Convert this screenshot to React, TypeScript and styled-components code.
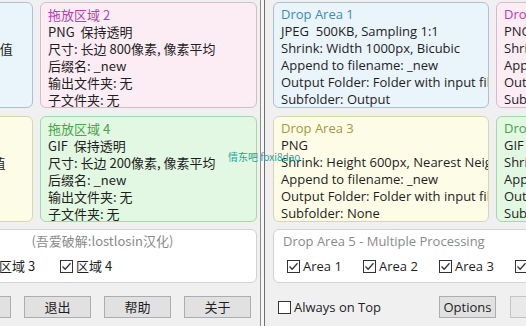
import React from "react";
import styled, { createGlobalStyle } from "styled-components";

const GlobalStyle = createGlobalStyle`
  html, body {
    margin: 0;
    padding: 0;
    background: #f4f4f4;
  }
  * {
    box-sizing: border-box;
  }
`;

type Tone = "blue" | "pink" | "yellow" | "green";
type Side = "left" | "right";

const tones: Record<Tone, { bg: string; border: string; title: string }> = {
  blue: { bg: "#eaf4fb", border: "#a9c3d2", title: "#3b8db3" },
  pink: { bg: "#fcecf4", border: "#d6bccb", title: "#b43fae" },
  yellow: { bg: "#fdfde7", border: "#d8d6ae", title: "#a6973a" },
  green: { bg: "#e2f8e2", border: "#a8d6a8", title: "#47a447" },
};

const Screen = styled.div`
  position: relative;
  width: 526px;
  height: 326px;
  display: flex;
  overflow: hidden;
  font-size: 13px;
  color: #1e1e1e;
`;

// left window is the Chinese build, right one the English build
const Window = styled.div<{ $side: Side }>`
  flex: none;
  width: ${(p) => (p.$side === "left" ? "261px" : "262px")};
  height: 326px;
  background: #f0f0f0;
  display: flex;
  flex-direction: column;
  align-items: ${(p) => (p.$side === "left" ? "flex-end" : "flex-start")};
  overflow: hidden;
  font-family: ${(p) =>
    p.$side === "left"
      ? `"Noto Sans CJK SC", sans-serif`
      : `"Open Sans", "Noto Sans CJK SC", sans-serif`};
  padding: ${(p) => (p.$side === "left" ? "2px 3px 0 0" : "2px 0 0 8px")};
  border-${(p) => (p.$side === "left" ? "right" : "left")}: 1px solid
    ${(p) => (p.$side === "left" ? "#8c8c8c" : "#6e6e6e")};
`;

const Gap = styled.div`
  flex: none;
  width: 3px;
  background: #f7f7f7;
`;

const CardGrid = styled.div`
  flex: none;
  display: grid;
  grid-template-columns: 216px 217px;
  grid-auto-rows: 106px;
  column-gap: 7px;
  row-gap: 8px;
`;

const Card = styled.div<{ $tone: Tone }>`
  background: ${(p) => tones[p.$tone].bg};
  border: 1px solid ${(p) => tones[p.$tone].border};
  border-radius: 6px;
  padding: 3px 0 0 7px;
  overflow: hidden;
  white-space: pre;
`;

const CardTitle = styled.div<{ $tone: Tone }>`
  color: ${(p) => tones[p.$tone].title};
  line-height: 17px;
`;

const CardLine = styled.div`
  line-height: 17px;
`;

const Group = styled.div`
  flex: none;
  width: 440px;
  margin-top: 7px;
  height: 54px;
  background: #ffffff;
  border: 1px solid #d2d2d2;
  border-radius: 6px;
  padding: 2px 9px 0 9px;
  white-space: nowrap;
`;

const GroupTitle = styled.div`
  display: flex;
  color: #8a8a8a;
  line-height: 18px;
`;

const TitleNote = styled.span<{ $offset: number }>`
  margin-left: ${(p) => p.$offset}px;
`;

const CheckRow = styled.div<{ $pitch: number; $indent: number }>`
  display: flex;
  margin-top: 7px;
  padding-left: ${(p) => p.$indent}px;
  height: 18px;
  align-items: center;
  & > * {
    flex: none;
    width: ${(p) => p.$pitch}px;
  }
`;

const CheckItem = styled.label`
  display: flex;
  align-items: center;
  gap: 3px;
  line-height: 18px;
`;

const Box = styled.span`
  flex: none;
  width: 13px;
  height: 13px;
  border: 1px solid #333333;
  background: #ffffff;
  display: inline-flex;
  align-items: center;
  justify-content: center;
`;

const BottomRow = styled.div<{ $side: Side }>`
  flex: none;
  width: 440px;
  margin-top: 13px;
  height: 22px;
  display: flex;
  align-items: center;
  gap: ${(p) => (p.$side === "left" ? "13px" : "14px")};
  padding: ${(p) => (p.$side === "left" ? "0 6px 0 0" : "0 0 0 5px")};
`;

const CheckCell = styled.div<{ $w?: number }>`
  flex: ${(p) => (p.$w ? "none" : "1")};
  width: ${(p) => (p.$w ? `${p.$w}px` : "auto")};
`;

const Button = styled.button<{ $w: number; $muted?: boolean }>`
  flex: none;
  width: ${(p) => p.$w}px;
  height: 22px;
  font: inherit;
  color: #1e1e1e;
  background: ${(p) => (p.$muted ? "#e9e9e9" : "#e1e1e1")};
  border: 1px solid ${(p) => (p.$muted ? "#c4c4c4" : "#adadad")};
  border-radius: 0;
  padding: 0;
  line-height: 20px;
`;

const Watermark = styled.div`
  position: absolute;
  left: 228px;
  top: 151px;
  font-size: 10px;
  line-height: 12px;
  color: #1ea59b;
  white-space: nowrap;
  font-family: "Noto Sans CJK SC", "Open Sans", sans-serif;
`;

const Check = ({ checked, label }: { checked: boolean; label: string }) => (
  <CheckItem>
    <Box>
      {checked && (
        <svg width="11" height="11" viewBox="0 0 11 11">
          <path d="M1.5 5.5 L4.2 8.2 L9.5 2.3" fill="none" stroke="#333" strokeWidth="1.3" />
        </svg>
      )}
    </Box>
    {label}
  </CheckItem>
);

type AreaData = { tone: Tone; title: string; lines: string[] };

const Area = ({ tone, title, lines }: AreaData) => (
  <Card $tone={tone}>
    <CardTitle $tone={tone}>{title}</CardTitle>
    {lines.map((l, i) => (
      <CardLine key={i}>{l}</CardLine>
    ))}
  </Card>
);

const zhAreas: AreaData[] = [
  {
    tone: "blue",
    title: "拖放区域 1",
    lines: ["JPEG  500KB, 采样 1:1", "尺寸: 宽度 1000像素, 双三次插值", "后缀名: _new", "输出文件夹: 源文件夹", "子文件夹: Output"],
  },
  {
    tone: "pink",
    title: "拖放区域 2",
    lines: ["PNG  保持透明", "尺寸: 长边 800像素, 像素平均", "后缀名: _new", "输出文件夹: 无", "子文件夹: 无"],
  },
  {
    tone: "yellow",
    title: "拖放区域 3",
    lines: ["PNG", "尺寸: 高度 600像素, 最邻近插值", "后缀名: _new", "输出文件夹: 源文件夹", "子文件夹: 无"],
  },
  {
    tone: "green",
    title: "拖放区域 4",
    lines: ["GIF  保持透明", "尺寸: 长边 200像素, 像素平均", "后缀名: _new", "输出文件夹: 无", "子文件夹: 无"],
  },
];

const enAreas: AreaData[] = [
  {
    tone: "blue",
    title: "Drop Area 1",
    lines: [
      "JPEG  500KB, Sampling 1:1",
      "Shrink: Width 1000px, Bicubic",
      "Append to filename: _new",
      "Output Folder: Folder with input file",
      "Subfolder: Output",
    ],
  },
  {
    tone: "pink",
    title: "Drop Area 2",
    lines: ["PNG  Keep transparency", "Shrink: Long side 800px, Average", "Append to filename: _new", "Output Folder: None", "Subfolder: None"],
  },
  {
    tone: "yellow",
    title: "Drop Area 3",
    lines: [
      "PNG",
      "Shrink: Height 600px, Nearest Neighbor",
      "Append to filename: _new",
      "Output Folder: Folder with input file",
      "Subfolder: None",
    ],
  },
  {
    tone: "green",
    title: "Drop Area 4",
    lines: ["GIF  Keep transparency", "Shrink: Long side 200px, Average", "Append to filename: _new", "Output Folder: None", "Subfolder: None"],
  },
];

const App = () => {
  return (
    <>
      <GlobalStyle />
      <Screen>
        <Window $side="left">
          <CardGrid>
            {zhAreas.map((a) => (
              <Area key={a.title} {...a} />
            ))}
          </CardGrid>
          <Group>
            <GroupTitle>
              <span>拖放区域 5 - 多重处理</span>
              <TitleNote $offset={80}>(吾爱破解:lostlosin汉化)</TitleNote>
            </GroupTitle>
            <CheckRow $pitch={77} $indent={2}>
              <Check checked label="区域 1" />
              <Check checked label="区域 2" />
              <Check checked label="区域 3" />
              <Check checked label="区域 4" />
            </CheckRow>
          </Group>
          <BottomRow $side="left">
            <CheckCell>
              <Check checked={false} label="总在最前" />
            </CheckCell>
            <Button $w={67}>选项</Button>
            <Button $w={67}>退出</Button>
            <Button $w={67}>帮助</Button>
            <Button $w={67}>关于</Button>
          </BottomRow>
        </Window>
        <Gap />
        <Window $side="right">
          <CardGrid>
            {enAreas.map((a) => (
              <Area key={a.title} {...a} />
            ))}
          </CardGrid>
          <Group>
            <GroupTitle>Drop Area 5 - Multiple Processing</GroupTitle>
            <CheckRow $pitch={76} $indent={4}>
              <Check checked label="Area 1" />
              <Check checked label="Area 2" />
              <Check checked label="Area 3" />
              <Check checked label="Area 4" />
            </CheckRow>
          </Group>
          <BottomRow $side="right">
            <CheckCell $w={147}>
              <Check checked={false} label="Always on Top" />
            </CheckCell>
            <Button $w={57}>Options</Button>
            <Button $w={57} $muted>
              Exit
            </Button>
            <Button $w={57} $muted>
              Help
            </Button>
            <Button $w={57} $muted>
              About
            </Button>
          </BottomRow>
        </Window>
        <Watermark>情东吧 foxi8dao</Watermark>
      </Screen>
    </>
  );
};

export default App;
